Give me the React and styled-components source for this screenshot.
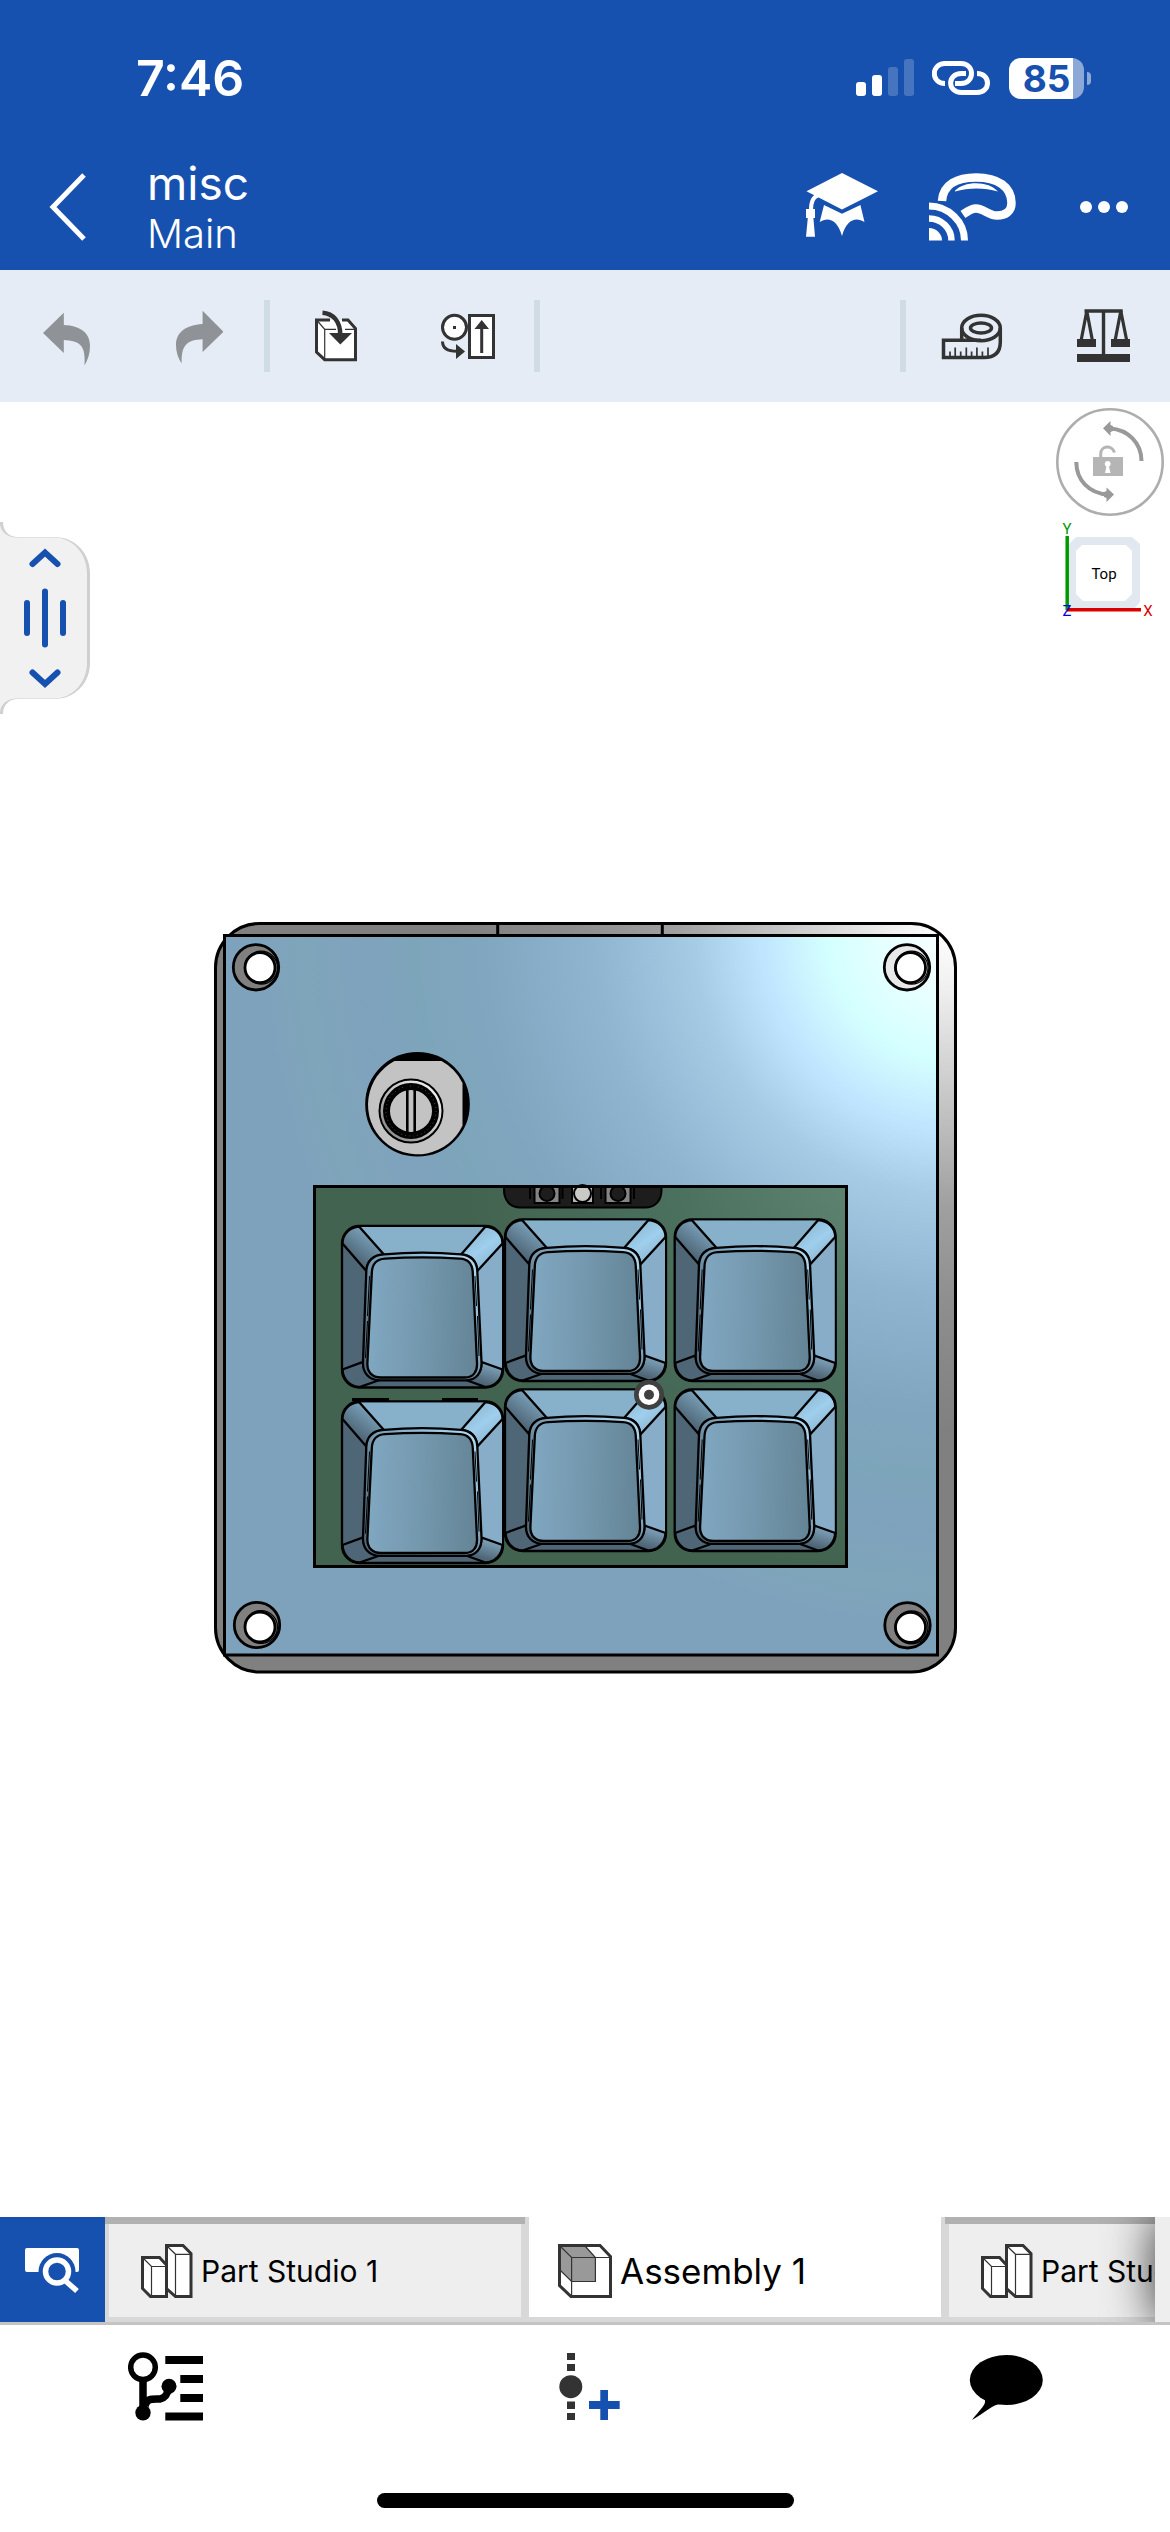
import React from "react";
import styled, { createGlobalStyle } from "styled-components";

const BLUE = "#1751af";
const INK = "#333333";

const GlobalStyle = createGlobalStyle`
  *, *::before, *::after { box-sizing: border-box; }
  body { margin: 0; background: #ffffff; font-family: Inter, "Liberation Sans", sans-serif; }
  svg { display: block; flex: none; }
`;

const Page = styled.div`
  display: flex;
  flex-direction: column;
  min-height: 100vh;
`;

const Header = styled.header`
  background: ${BLUE};
  color: #ffffff;
`;

const StatusBar = styled.div`
  display: flex;
  align-items: center;
  justify-content: space-between;
  height: 144px;
  padding: 12px 79px 0 136px;
`;

const Time = styled.time`
  font-size: 50px;
  line-height: 60px;
  font-weight: 600;
`;

const StatusIcons = styled.div`
  display: flex;
  align-items: center;
  gap: 18px;
`;

const Battery = styled.div`
  display: flex;
  align-items: center;
  gap: 3px;
`;

const BatteryBody = styled.div`
  width: 75px;
  height: 41px;
  border-radius: 12px;
  background: linear-gradient(to right, #ffffff 64px, #8ba8d7 64px);
  color: ${BLUE};
  font-size: 37px;
  line-height: 41px;
  font-weight: 700;
  text-align: center;
`;

const BatteryTip = styled.div`
  width: 4px;
  height: 13px;
  border-radius: 0 4px 4px 0;
  background: #8ba8d7;
`;

const TitleBar = styled.div`
  display: flex;
  align-items: center;
  height: 126px;
`;

const IconButton = styled.button`
  display: flex;
  align-items: center;
  justify-content: center;
  flex: none;
  width: 132px;
  height: 126px;
  padding: 0;
  border: 0;
  background: none;
`;

const Titles = styled.div`
  flex: 1;
  padding: 2px 0 0 15px;
`;

const DocumentName = styled.h1`
  margin: 0;
  font-size: 46px;
  line-height: 52px;
  font-weight: 400;
`;

const Workspace = styled.p`
  margin: 0;
  font-size: 40px;
  line-height: 50px;
  font-weight: 300;
`;

const Toolbar = styled.div`
  display: flex;
  align-items: center;
  height: 132px;
  background: #e5ecf6;
`;

const Divider = styled.div`
  flex: none;
  width: 6px;
  height: 72px;
  background: #cfdce5;
`;

const Spacer = styled.div`
  flex: 1;
`;

const Canvas = styled.main`
  position: relative;
  flex: 1;
  display: flex;
  align-items: center;
  justify-content: center;
  padding-bottom: 29px;
`;

const Model = styled.svg`
  width: 750px;
  max-width: 100%;
  flex: 0 1 auto;
`;

const PanelHandle = styled.button`
  position: absolute;
  left: 0;
  top: 118px;
  padding: 0;
  border: 0;
  background: none;
`;

const ViewTools = styled.div`
  position: absolute;
  top: 6px;
  right: 6px;
  display: flex;
  flex-direction: column;
`;

const ViewButton = styled.button`
  padding: 0;
  border: 0;
  background: none;
`;

const TabBar = styled.nav`
  display: flex;
  height: 108px;
  border-bottom: 3px solid #c4c4c4;
  overflow: hidden;
`;

const TabSearch = styled.button`
  display: flex;
  align-items: center;
  justify-content: center;
  flex: none;
  width: 105px;
  padding: 0;
  border: 0;
  background: ${BLUE};
`;

const Tabs = styled.div`
  display: flex;
  flex: 1;
  min-width: 0;
  overflow: hidden;
`;

const Tab = styled.button`
  display: flex;
  align-items: center;
  flex: none;
  gap: 8px;
  width: 420px;
  padding: 2px 0 0 ${(p) => (p.$active ? 33 : 36)}px;
  border: 0;
  background: ${(p) => (p.$active ? "#ffffff" : "#eeeeee")};
  box-shadow:
    inset 0 ${(p) => (p.$active ? 0 : 7)}px #b1b1b1,
    inset 4px 0 #d8d8d8,
    inset -4px 0 #d8d8d8,
    inset 0 -5px #d8d8d8;
  color: #000000;
  font-family: inherit;
  font-size: ${(p) => (p.$active ? 35 : 30)}px;
  line-height: 40px;
  white-space: nowrap;
`;

const TabEdge = styled.div`
  position: relative;
  flex: none;
  width: 75px;
  margin-right: -60px;
  background: #eeeeee;
  box-shadow: 0 0 48px rgba(0, 0, 0, 0.8);
`;

const Footer = styled.footer`
  display: flex;
  flex-direction: column;
  align-items: center;
  justify-content: space-between;
  height: 207px;
  padding-bottom: 24px;
`;

const Actions = styled.div`
  display: flex;
  align-items: center;
  justify-content: space-between;
  width: 100%;
  height: 123px;
  padding: 0 98px 0 100px;
`;

const HomeIndicator = styled.div`
  width: 417px;
  height: 15px;
  border-radius: 8px;
  background: #000000;
`;

const ToolIcon = ({ box, children }) => {
  const [, , w, h] = box.split(" ");
  return (
    <svg width={w} height={h} viewBox={box} fill="none" aria-hidden="true">
      {children}
    </svg>
  );
};

const SignalIcon = () => (
  <svg width="58" height="38" viewBox="0 0 58 38" fill="#fff" aria-label="Signal">
    <rect x="0" y="23" width="10" height="14" rx="3" />
    <rect x="16" y="16" width="10" height="21" rx="3" />
    <g opacity=".2">
      <rect x="32" y="8" width="10" height="29" rx="3" />
      <rect x="48" y="0" width="10" height="37" rx="3" />
    </g>
  </svg>
);

const LinkIcon = () => (
  <svg width="59" height="36" viewBox="932 60 59 36" fill="none" aria-label="Linked">
    <path d="M945 83.500C930.500 83.500 931 63.500 945 63.500H961C975 63.500 975 83.500 961 83.500H955" stroke="#fff" strokeWidth="5" />
    <path d="M966 73.500H961.500C947 73.500 947 92.500 961.500 92.500H977C991 92.500 991 73.500 977 73.500" stroke={BLUE} strokeWidth="10" />
    <path d="M966 73.500H961.500C947 73.500 947 92.500 961.500 92.500H977C991 92.500 991 73.500 977 73.500" stroke="#fff" strokeWidth="5" />
    <path d="M961 63.500C975 63.500 975 83.500 961 83.500" stroke={BLUE} strokeWidth="9" />
    <path d="M958 63.500H961C975 63.500 975 83.500 961 83.500H955" stroke="#fff" strokeWidth="5" />
  </svg>
);

const GraduationIcon = () => (
  <ToolIcon box="802 171 76 72">
    <g fill="#fff">
      <path d="M806.500 191.300L842 173L878 191.300L842 209.500Z" />
      <path d="M824 205L842 213.700L860.400 205L864.500 222C856 217 847 219 842 236C837 219 828 217 819.700 222Z" />
      <path d="M806 209H815V218H813.400L815 236.700H806L807.800 218H806Z" />
    </g>
    <path d="M818 195.500C812.500 197 811 202 811 210" stroke="#fff" strokeWidth="4" />
  </ToolIcon>
);

const HeadsetIcon = () => (
  <ToolIcon box="927 172 90 70">
    <g stroke="#fff">
      <path strokeWidth="8.5" d="M942 201C943 184 958 177.500 976 177.500C998 177.500 1011.500 187 1011.500 203C1011.500 212 1005 215.500 997 215.500C988 215.500 984 208.500 976 208.500C971 208.500 968 211 963 214.500" />
      <path strokeWidth="6.500" d="M929 218.500A22.500 22 0 0 1 951.500 240.500" />
      <path strokeWidth="7" d="M929 206A35.800 34.500 0 0 1 964.500 240.500" />
    </g>
    <path fill="#fff" d="M929 228A13 12.500 0 0 1 942 240.500H929ZM955 190.700C964 180.500 989 180.500 998 191.500C984 187.500 969 187.500 955 191.500Z" />
  </ToolIcon>
);

const ReplaceIcon = () => (
  <ToolIcon box="439 312 58 50">
    <g stroke={INK} strokeWidth="3">
      <circle cx="454.500" cy="328.300" r="12" fill="#fff" />
      <rect x="469.500" y="316.500" width="24" height="42" fill="#fff" />
      <path d="M481.700 354V328M442.500 342.500C442.500 350 448 352.300 457 352.300" />
    </g>
    <path fill={INK} d="M453 327H456V330H453ZM474.500 330L481.700 321L489 330ZM456 345L465 352.500L456 360Z" />
  </ToolIcon>
);

const TapeIcon = () => (
  <ToolIcon box="940 311 64 49">
    <g stroke={INK} strokeWidth="3.500">
      <ellipse cx="981" cy="327" rx="19.300" ry="12.700" />
      <ellipse cx="981" cy="327" rx="10.500" ry="5" />
      <path d="M981 339.300H943.500V356.500H984C996 356.500 1000.300 350 1000.300 341V327M961.700 327V338" />
      <path strokeWidth="1.700" d="M950 356V350.500M955.200 356V346.500M960.700 356V350.500M966.300 356V346.500M971.600 356V350.500M976.900 356V346.500M982.400 356V350.500M988 356V346.500" />
    </g>
  </ToolIcon>
);

const ScaleIcon = () => (
  <ToolIcon box="1076 308 56 56">
    <path fill={INK} d="M1084.500 309.300H1122.700V312.800H1084.500ZM1101.800 311H1105.200V356H1101.800ZM1077 354H1130V362H1077ZM1077 339H1096V347H1077ZM1111 339H1130V347H1111Z" />
    <path stroke={INK} strokeWidth="3.200" d="M1081 341L1086.800 311L1092.500 341M1115 341L1120.800 311L1126.800 341" />
  </ToolIcon>
);

const InsertIcon = () => (
  <ToolIcon box="313 309 46 52">
    <path fill="#fff" d="M316.500 319H348L355.500 327.500V358.700H324.700L316.500 351Z" />
    <path stroke={INK} strokeWidth="3" d="M330 319H316.500V351L324.700 358.700H355.500V327.500L348 319H342" />
    <path stroke={INK} strokeWidth="1.200" d="M317 319.500L324.700 328.300V358M324.700 328.300H336M345 328.300H355" />
    <path stroke={INK} strokeWidth="4.500" d="M322.500 311.700C333 312.500 340.300 320 340.300 334" />
    <path fill={INK} d="M329 332H352L340.300 343.500Z" />
  </ToolIcon>
);

const PartIcon = () => (
  <svg width="52" height="54" viewBox="141 2243 52 54" fill="none" aria-hidden="true">
    <g fill="#fff" stroke={INK} strokeWidth="3">
      <path d="M142.500 2256.500H159.500L166.500 2264V2295.500H150.500L142.500 2287.500Z" />
      <path d="M166.500 2244.500H183L191 2252.500V2295.500H175.500L166.500 2287.500Z" />
    </g>
    <path stroke={INK} strokeWidth="1.200" d="M143 2257L151.500 2265.500H166M151.500 2265.500V2295M167 2245L175.500 2253.300H190M175.500 2253.300V2295" />
  </svg>
);

const AssemblyIcon = () => (
  <svg width="54" height="54" viewBox="558 2243 54 54" fill="none" aria-hidden="true">
    <path fill="#fff" d="M559.500 2244.500H600L610.500 2255.500V2295.500H571L559.500 2284.500Z" />
    <path fill="#999" d="M559.500 2244.500H585L595.400 2256.500V2280.500H571.600L559.500 2269Z" />
    <path stroke={INK} strokeWidth="1.200" d="M560 2245L571.600 2256.500H610M571.600 2256.500V2295M585 2245L595.400 2256.500V2280.500H571.600L560 2269" />
    <path stroke={INK} strokeWidth="3" d="M559.500 2244.500H600L610.500 2255.500V2295.500H571L559.500 2284.500Z" />
  </svg>
);

const Keycap = ({ x, y }) => (
  <g transform={`translate(${x} ${y})`} stroke="#000" strokeWidth="2.300">
    <rect width="161" height="161.500" rx="17.500" fill="#4f6676" />
    <path d="M17 1H144L119 28.500H42Z" fill="#87b1cb" stroke="none" />
    <path d="M160 17V144L139 136L135 45Z" fill="#87adc8" stroke="none" />
    <path d="M17 .500C8 1 .500 8 .500 17.500L24.300 45C25 35 32 29 41.700 28.300Z" fill="url(#capTL)" />
    <path d="M143.500 .500C153 1 160.500 8 160.500 17.500L135.300 45C134.500 35 129 29 119.300 28.300Z" fill="url(#capTR)" />
    <path d="M.500 143.500C1 153 8 161 17.500 161L37.700 154C27 153 21 146 21 136Z" fill="#4f6676" />
    <path d="M160.500 143.500C160 153 153 161 143.500 161L124 154C134 153 140 146 139.300 136Z" fill="url(#capBR)" />
    <path d="M42 28.300Q80 25 119 28.300C129 29 135 36 135.300 45L139.500 136C140 147 134 154 124 154.300H38C27 154 20.500 147 21 136L24.300 45C25 35 31 29 42 28.300Z" fill="url(#capRim)" />
    <path d="M43 32.600Q80 30 118 32.600C126 33 130.500 38 130.800 47L135 137C135.500 146 131 151.500 123 151.500H39C30 151.500 25 146 25.400 137L29.800 47C30 38 35 33 43 32.600Z" fill="url(#capFace)" />
    <path d="M27.500 50L25.500 90M25.500 95L23.500 132M133 50L134.500 80M135.500 90L137 130" strokeWidth="1" />
  </g>
);

const Hole = ({ x, y, dx, dy, fill }) => (
  <g stroke="#000" strokeWidth="2.800">
    <circle cx={x} cy={y} r="22.700" fill={fill} />
    <circle cx={x + dx + 1} cy={y + dy} r="16.500" fill="none" strokeWidth="1.200" />
    <circle cx={x + dx} cy={y + dy} r="15" fill="#fff" />
  </g>
);

const keys = [
  [342, 1226],
  [505, 1219.5],
  [674.7, 1219.5],
  [342, 1401.5],
  [505, 1389.5],
  [674.7, 1389.5],
];

const KeypadModel = () => (
  <Model viewBox="210 900 750 790" role="img" aria-label="Six key macro pad, top view">
    <defs>
      <radialGradient id="plate" gradientUnits="userSpaceOnUse" cx="960" cy="930" r="700">
        <stop offset="0" stopColor="#ffffff" />
        <stop offset=".06" stopColor="#f2ffff" />
        <stop offset=".19" stopColor="#d4ffff" />
        <stop offset=".285" stopColor="#bfe5ff" />
        <stop offset=".38" stopColor="#a5cbe5" />
        <stop offset=".52" stopColor="#90b5d0" />
        <stop offset=".68" stopColor="#81a6c0" />
        <stop offset=".78" stopColor="#7da5ba" />
        <stop offset=".84" stopColor="#7fa2bd" />
        <stop offset=".94" stopColor="#7ea5ba" />
        <stop offset="1" stopColor="#7fa2bc" />
      </radialGradient>
      <radialGradient id="casing" gradientUnits="userSpaceOnUse" cx="950" cy="930" r="500">
        <stop offset="0" stopColor="#ffffff" />
        <stop offset=".12" stopColor="#efefef" />
        <stop offset=".32" stopColor="#cacaca" />
        <stop offset=".55" stopColor="#a0a0a0" />
        <stop offset=".75" stopColor="#8e8e8e" />
        <stop offset="1" stopColor="#808080" />
      </radialGradient>
      <radialGradient id="board" gradientUnits="userSpaceOnUse" cx="880" cy="1150" r="420">
        <stop offset="0" stopColor="#648876" />
        <stop offset=".5" stopColor="#4b705e" />
        <stop offset="1" stopColor="#426350" />
      </radialGradient>
      <linearGradient id="capFace" x1="0" y1="0" x2="1" y2=".03">
        <stop offset="0" stopColor="#81a8c2" />
        <stop offset=".5" stopColor="#7498ae" />
        <stop offset="1" stopColor="#658597" />
      </linearGradient>
      <linearGradient id="capRim" x1="0" y1="1" x2="1" y2="0">
        <stop offset="0" stopColor="#4f6676" />
        <stop offset=".45" stopColor="#6d8da2" />
        <stop offset=".8" stopColor="#9ccae8" />
        <stop offset="1" stopColor="#b9ddf2" />
      </linearGradient>
      <linearGradient id="capTL" x1=".7" y1=".2" x2=".3" y2=".75">
        <stop offset="0" stopColor="#7aa1ba" />
        <stop offset="1" stopColor="#4d6474" />
      </linearGradient>
      <linearGradient id="capTR" x1=".3" y1=".2" x2=".7" y2=".8">
        <stop offset="0" stopColor="#90bdd9" />
        <stop offset=".5" stopColor="#9fcfed" />
        <stop offset="1" stopColor="#8fbad6" />
      </linearGradient>
      <linearGradient id="capBR" x1=".7" y1=".1" x2=".4" y2=".8">
        <stop offset="0" stopColor="#7fa4bd" />
        <stop offset="1" stopColor="#4f6676" />
      </linearGradient>
      <linearGradient id="knobRing" x1="0" y1="1" x2="1" y2="0">
        <stop offset="0" stopColor="#777" />
        <stop offset=".5" stopColor="#c3c3c3" />
        <stop offset="1" stopColor="#fff" />
      </linearGradient>
    </defs>

    <g stroke="#000" strokeWidth="3">
      <rect x="215.500" y="923.500" width="740" height="748.500" rx="44" fill="url(#casing)" />
      <path d="M497.700 923V935M662.300 923V935" />
      <rect x="224.500" y="935.500" width="713" height="719.500" fill="url(#plate)" />
    </g>

    <Hole x={256} y={967.3} dx={4} dy={0.4} fill="#808080" />
    <Hole x={907} y={967.3} dx={3.5} dy={0.4} fill="#e8e8e8" />
    <Hole x={257} y={1625} dx={3} dy={2} fill="#808080" />
    <Hole x={907.5} y={1625.3} dx={3} dy={2} fill="#808080" />

    <g stroke="#000" strokeWidth="2.600">
      <circle cx="417.500" cy="1104.300" r="51" fill="#000" />
      <path fill="#c3c3c3" stroke="none" d="M394.500 1061H441.500A49.500 49.500 0 0 1 462.500 1083V1125.500A49.500 49.500 0 1 1 394.500 1061Z" />
      <circle cx="411" cy="1111" r="31.500" fill="url(#knobRing)" strokeWidth="2" />
      <circle cx="411" cy="1111" r="24.500" fill="#c3c3c3" strokeWidth="7" />
      <circle cx="411" cy="1111" r="25" fill="none" stroke="#555" strokeWidth="1" strokeDasharray="1 3" />
      <path d="M407.300 1086V1136M414.700 1086V1136" />
    </g>

    <rect x="314.500" y="1186.500" width="532" height="380" fill="url(#board)" stroke="#000" strokeWidth="3" />

    <g stroke="#000" strokeWidth="2">
      <path d="M504 1187H661.500V1190C661.500 1201 655 1207.500 645 1207.500H520C510 1207.500 504 1200 504 1190Z" fill="#1d1d1d" />
      <path d="M530 1188V1199M562.500 1188V1199M601 1188V1199M634 1188V1199" />
      <rect x="534.500" y="1187" width="25" height="16" fill="#858585" />
      <rect x="605.500" y="1187" width="25" height="16" fill="#858585" />
      <rect x="572" y="1187" width="21" height="16" fill="#b5b5b5" />
      <circle cx="547" cy="1193.500" r="7.500" fill="#1d1d1d" />
      <circle cx="618" cy="1193.500" r="7.500" fill="#1d1d1d" />
      <circle cx="582.500" cy="1193.500" r="8.500" fill="#c9cac6" />
      <path d="M314 1186.500H847" strokeWidth="3" />
      <path d="M352 1399.500H389M442 1399.500H478" strokeWidth="3" />
    </g>

    {keys.map(([x, y]) => (
      <Keycap key={`${x}-${y}`} x={x} y={y} />
    ))}

    <circle cx="649" cy="1394.700" r="15" fill="#404040" />
    <circle cx="649" cy="1394.700" r="10.300" fill="#fff" />
    <circle cx="649" cy="1394.700" r="5" fill="#404040" />
  </Model>
);

export default function App() {
  return (
    <Page>
      <GlobalStyle />
      <Header>
        <StatusBar>
          <Time>7:46</Time>
          <StatusIcons>
            <SignalIcon />
            <LinkIcon />
            <Battery>
              <BatteryBody>85</BatteryBody>
              <BatteryTip />
            </Battery>
          </StatusIcons>
        </StatusBar>
        <TitleBar>
          <IconButton aria-label="Back">
            <ToolIcon box="46 172 40 70">
              <path d="M84 175L53 207L84 239" stroke="#fff" strokeWidth="5" />
            </ToolIcon>
          </IconButton>
          <Titles>
            <DocumentName>misc</DocumentName>
            <Workspace>Main</Workspace>
          </Titles>
          <IconButton aria-label="Learning center">
            <GraduationIcon />
          </IconButton>
          <IconButton aria-label="Stream to headset">
            <HeadsetIcon />
          </IconButton>
          <IconButton aria-label="More">
            <ToolIcon box="1079 200 50 14">
              <g fill="#fff">
                <circle cx="1086" cy="207" r="6" />
                <circle cx="1104" cy="207" r="6" />
                <circle cx="1122" cy="207" r="6" />
              </g>
            </ToolIcon>
          </IconButton>
        </TitleBar>
      </Header>

      <Toolbar role="toolbar" aria-label="Assembly tools">
        <IconButton aria-label="Undo">
          <ToolIcon box="42 306 48 60">
            <path fill="#8f9296" d="M43 333L63.800 312.700V325C80 326 90 332 90 346C90 353 88 360 84.500 365.500C86 345 80 341 63.800 340V353Z" />
          </ToolIcon>
        </IconButton>
        <IconButton aria-label="Redo">
          <ToolIcon box="173 307 50 58">
            <path fill="#8f9296" d="M223.500 331.700L202.600 310.700V324C186 325 176 332 176 345C176 352 178 358 181.700 363.500C181 345 187 340 202.600 339.300V352Z" />
          </ToolIcon>
        </IconButton>
        <Divider />
        <IconButton aria-label="Insert part">
          <InsertIcon />
        </IconButton>
        <IconButton aria-label="Replace part">
          <ReplaceIcon />
        </IconButton>
        <Divider />
        <Spacer />
        <Divider />
        <IconButton aria-label="Measure">
          <TapeIcon />
        </IconButton>
        <IconButton aria-label="Mass properties">
          <ScaleIcon />
        </IconButton>
      </Toolbar>

      <Canvas>
        <KeypadModel />
        <PanelHandle aria-label="Open side panel">
          <svg width="92" height="196" viewBox="0 520 92 196" fill="none" aria-hidden="true">
            <path fill="#d0d0d0" d="M0 522H3C3 531 9 537 18 537H54C75 537 90 553 90 573V663C90 683 75 699 54 699H18C9 699 3 705 3 714H0Z" />
            <path fill="#f1f1f1" d="M0 524C1 532 7 537.500 17 537.500H54C73 537.500 87 554 87 573V663C87 682 73 698.500 54 698.500H17C7 698.500 1 704 0 712Z" />
            <path stroke={BLUE} strokeWidth="6" strokeLinecap="round" d="M32.500 564L45 552.500L57.500 564M27 603V633M45 591.500V644.500M63 603V633M32.500 672.500L45 684L57.500 672.500" />
          </svg>
        </PanelHandle>
        <ViewTools>
          <ViewButton aria-label="Lock rotation">
            <svg width="108" height="108" viewBox="0 0 108 108" fill="none" aria-hidden="true">
              <circle cx="54" cy="54" r="52.700" fill="#fff" stroke="#adadad" strokeWidth="2.600" />
              <path stroke="#999" strokeWidth="4" d="M85.500 53C85.500 35 72 21.500 54 20.500M20.300 54C20.300 72 33 85.500 52 86.500" />
              <path fill="#999" d="M47 20.300L54.500 13V17L57 18V23L54.500 24V28ZM58 86.500L50.500 79.500V83L48 84V89L50.500 90V94Z" />
              <path fill="#b5b5b5" d="M37 49H67V68H37Z" />
              <path stroke="#b5b5b5" strokeWidth="3" d="M44.700 50V46C44.700 37 56 37 58.500 44.500" />
              <path fill="#fff" d="M51.700 53A3 3 0 0 1 53 58.700L54.500 65H49L50.400 58.700A3 3 0 0 1 51.700 53Z" />
            </svg>
          </ViewButton>
          <ViewButton aria-label="View cube">
            <svg width="108" height="110" viewBox="1056 516 108 110" aria-hidden="true">
              <path fill="#e2e8ef" d="M1069 544L1076 537H1132L1140 544V602L1134 609H1069Z" />
              <path fill="#fff" d="M1076 551L1082 545H1126L1132 551V594L1125 601H1083L1076 594Z" />
              <path stroke="#009900" strokeWidth="3.500" d="M1067.200 536V610" />
              <path stroke="#d80000" strokeWidth="3.500" d="M1067 609.800H1141" />
              <g fontFamily="Roboto, Noto Sans, sans-serif" fontSize="15" textAnchor="middle">
                <text x="1104" y="579">Top</text>
                <text x="1067" y="534" fill="#009900">Y</text>
                <text x="1067" y="616" fill="#0000dd">Z</text>
                <text x="1148" y="616" fill="#d80000">X</text>
              </g>
            </svg>
          </ViewButton>
        </ViewTools>
      </Canvas>

      <TabBar aria-label="Document tabs">
        <TabSearch aria-label="Search tabs">
          <ToolIcon box="25 2246 56 48">
            <rect x="25" y="2248" width="54" height="24" rx="2" fill="#fff" />
            <circle cx="57" cy="2271.500" r="18.500" fill={BLUE} />
            <circle cx="57" cy="2271.500" r="11.500" stroke="#fff" strokeWidth="5.500" />
            <path d="M64.500 2280L77 2291" stroke="#fff" strokeWidth="5.500" />
          </ToolIcon>
        </TabSearch>
        <Tabs>
          <Tab>
            <PartIcon />
            Part Studio 1
          </Tab>
          <Tab $active aria-current="page">
            <AssemblyIcon />
            Assembly 1
          </Tab>
          <Tab>
            <PartIcon />
            Part Studio 2
          </Tab>
        </Tabs>
        <TabEdge />
      </TabBar>

      <Footer>
        <Actions>
          <IconButton aria-label="Instances and mates">
            <ToolIcon box="128 2352 76 70">
              <circle cx="143" cy="2367.300" r="12.300" stroke="#000" strokeWidth="5.500" />
              <path stroke="#000" strokeWidth="7.500" d="M143 2380V2412M145 2406C147 2398 152 2399 160 2399C166 2398 168 2393 169 2387" />
              <circle cx="143" cy="2412.700" r="7.700" fill="#000" />
              <circle cx="169" cy="2386.300" r="7.500" fill="#000" />
              <path fill="#000" d="M165.300 2356H203V2364H165.300ZM180.300 2375H203V2383H180.300ZM180.300 2394H203V2402H180.300ZM165.300 2412.500H203V2420.500H165.300Z" />
            </ToolIcon>
          </IconButton>
          <IconButton aria-label="Add mate connector">
            <ToolIcon box="552 2352 68 70">
              <path fill={INK} d="M567 2353H575V2360H567ZM567 2364H575V2371H567ZM567 2401.500H575V2409H567ZM567 2413H575V2420H567Z" />
              <circle cx="570.800" cy="2386.700" r="11.500" fill={INK} />
              <path fill={BLUE} d="M600.300 2390H608V2401H619.700V2409H608V2420H600.300V2409H589V2401H600.300Z" />
            </ToolIcon>
          </IconButton>
          <IconButton aria-label="Comments">
            <ToolIcon box="969 2351 74 70">
              <ellipse cx="1006.300" cy="2379" rx="36.500" ry="25" fill="#000" />
              <path fill="#000" d="M984 2396C987 2403 984 2404 972 2419C986 2411 995 2401 1004 2403Z" />
            </ToolIcon>
          </IconButton>
        </Actions>
        <HomeIndicator />
      </Footer>
    </Page>
  );
}
